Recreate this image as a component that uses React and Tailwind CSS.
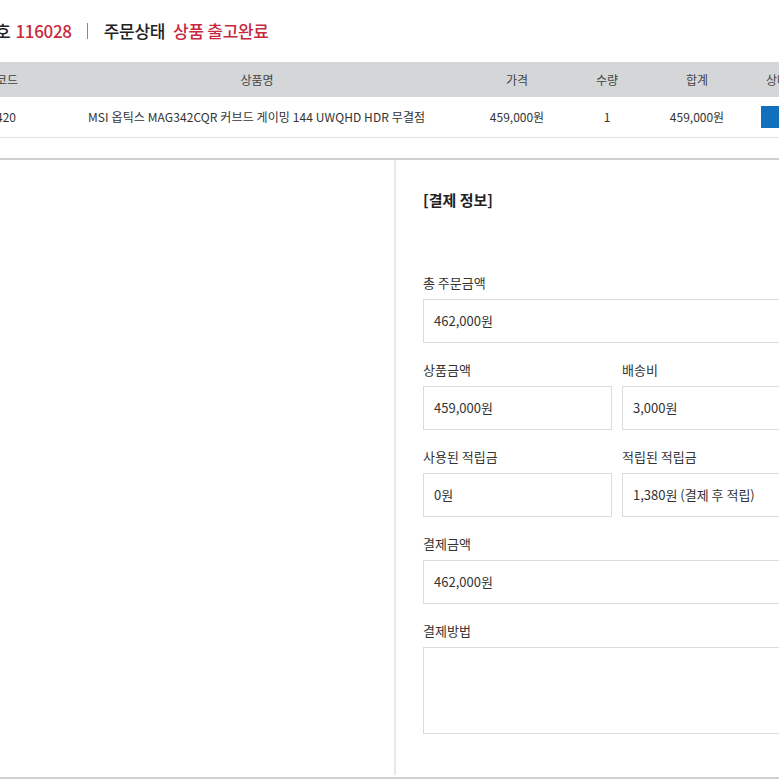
import React from "react";

const font = "font-['Noto_Sans_CJK_KR','Noto_Sans',sans-serif]";

function Field({ label, value, tall }) {
  return (
    <div>
      <div className="text-[13px] leading-[20px] text-[#333] mb-[6px]">{label}</div>
      <div
        className={`${tall ? "h-[87px] items-start pt-[14px]" : "h-[44px] items-center"} border border-[#dcdcdc] px-[10px] flex text-[13px] text-[#333] bg-white whitespace-nowrap overflow-hidden`}
      >
        {value}
      </div>
    </div>
  );
}

export default function App() {
  return (
    <div className={`w-[779px] h-[779px] overflow-hidden bg-white ${font} text-[#333]`}>
      {/* Title line */}
      <div className="h-[62px] flex items-center whitespace-nowrap text-[17px] font-medium tracking-[-0.3px] text-[#222]">
        <span className="-ml-[51px]">주문번호</span>
        <span className="ml-[5px] text-[#c72a3e]">116028</span>
        <span className="ml-[15px] mr-[16px] w-px h-[16px] bg-[#888]"></span>
        <span>주문상태</span>
        <span className="ml-[8px] text-[#c72a3e]">상품 출고완료</span>
      </div>

      {/* Table header */}
      <div className="w-[900px] h-[35px] bg-[#d4d6d8] flex items-center text-[12px] text-[#444] whitespace-nowrap">
        <div className="w-[40px] flex justify-end pr-[22px]"><span>상품코드</span></div>
        <div className="w-[434px] text-center">상품명</div>
        <div className="w-[86px] text-center">가격</div>
        <div className="w-[94px] text-center">수량</div>
        <div className="w-[86px] text-center">합계</div>
        <div className="w-[120px] pl-[26px]">상태</div>
      </div>
      {/* Table row */}
      <div className="w-[900px] h-[41px] border-b border-[#e3e3e3] flex items-center text-[12px] text-[#333] whitespace-nowrap">
        <div className="w-[40px] flex justify-end pr-[24px]"><span>13420</span></div>
        <div className="w-[434px] pl-[48px] tracking-[0.1px]">MSI 옵틱스 MAG342CQR 커브드 게이밍 144 UWQHD HDR 무결점</div>
        <div className="w-[86px] text-center">459,000원</div>
        <div className="w-[94px] text-center">1</div>
        <div className="w-[86px] text-center">459,000원</div>
        <div className="w-[120px] pl-[21px]">
          <div className="w-[70px] h-[22px] bg-[#1170be] text-white text-[12px] flex items-center justify-center">상세</div>
        </div>
      </div>
      <div className="h-[22px] border-b-2 border-[#cfcfcf]"></div>

      {/* Main area */}
      <div className="w-[900px] h-[619px] border-b-2 border-[#cfcfcf] flex items-start">
        <div className="w-[394px] shrink-0"></div>
        <div className="w-[445px] shrink-0 h-[615px] border-l-2 border-[#e8e8e8] pl-[27px] pr-[28px] pt-[29px]">
          <div className="text-[15px] font-bold leading-[22px] text-[#222] mb-[62px]">[결제 정보]</div>
          <div className="flex flex-col gap-[17px]">
            <Field label="총 주문금액" value="462,000원" />
            <div className="grid grid-cols-2 gap-[10px]">
              <Field label="상품금액" value="459,000원" />
              <Field label="배송비" value="3,000원" />
            </div>
            <div className="grid grid-cols-2 gap-[10px]">
              <Field label="사용된 적립금" value="0원" />
              <Field label="적립된 적립금" value="1,380원 (결제 후 적립)" />
            </div>
            <Field label="결제금액" value="462,000원" />
            <Field label="결제방법" value="" tall />
          </div>
        </div>
      </div>
    </div>
  );
}
